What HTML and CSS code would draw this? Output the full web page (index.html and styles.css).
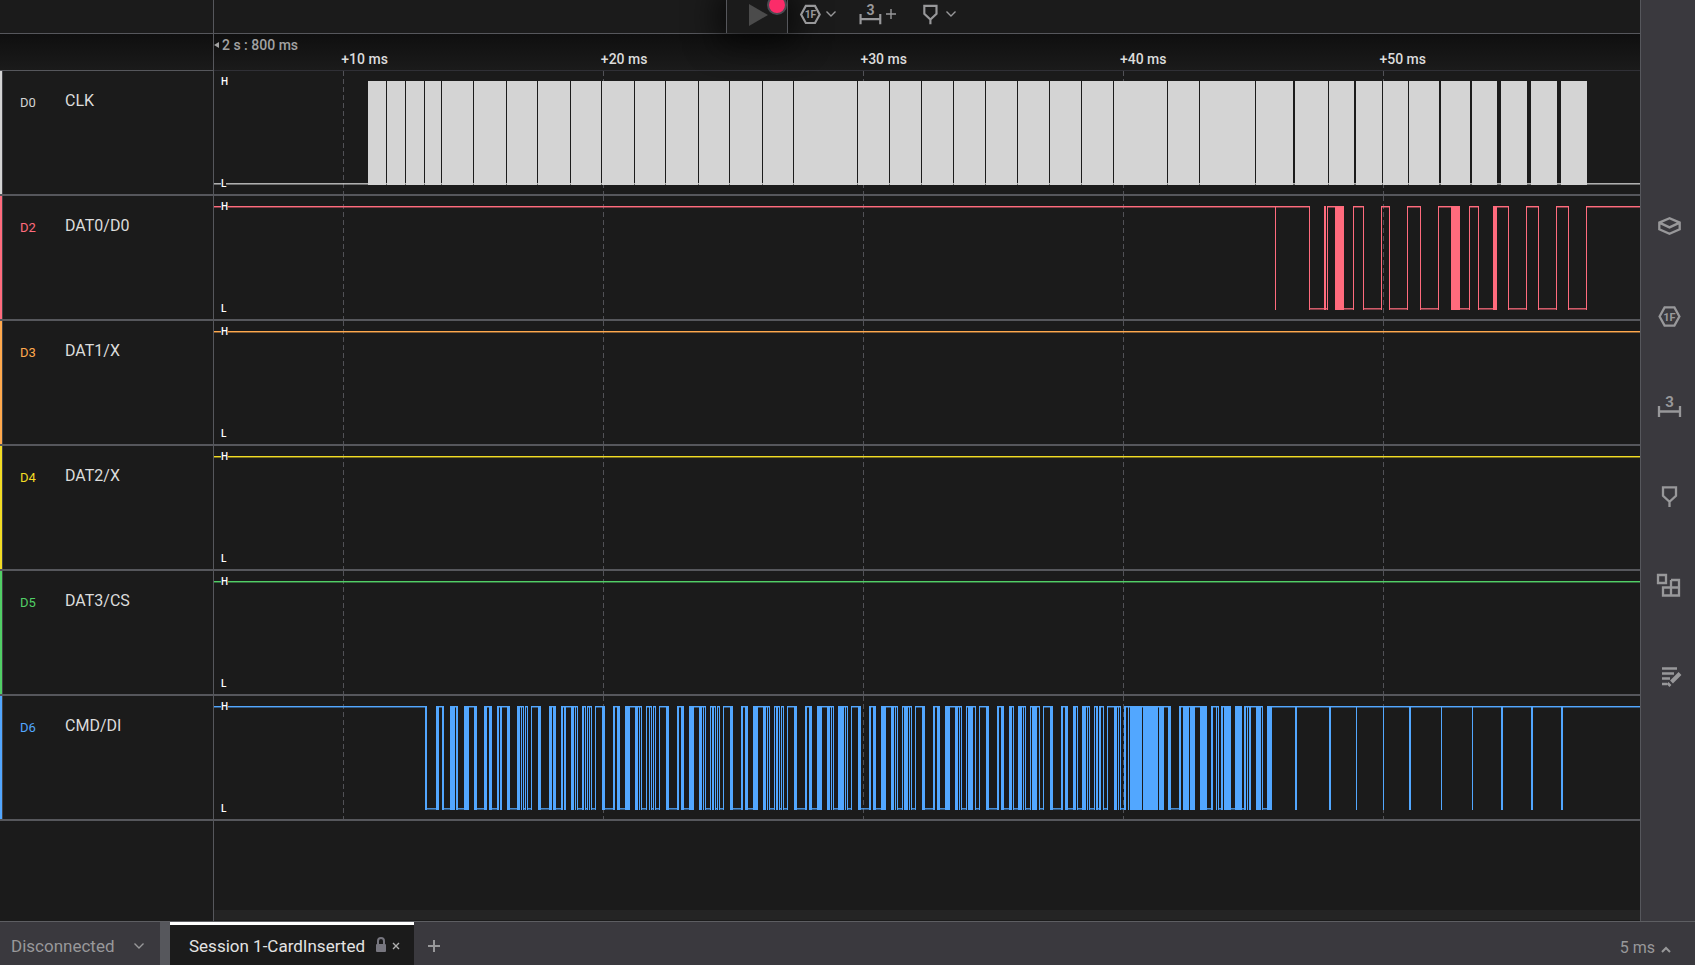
FILE: index.html
```html
<!DOCTYPE html>
<html lang="en">
<head>
<meta charset="utf-8">
<title>Session 1-CardInserted</title>
<link rel="stylesheet" href="styles.css">
</head>
<body>
<div class="app">
  <main class="analyzer">
    <header class="toolbar">
      <div class="side-cell"></div>
      <div class="tools">
        <button class="play" aria-label="Start capture">
          <svg width="20" height="22" viewBox="0 0 20 22"><path d="M0 0l19 11L0 22z"/></svg>
          <span class="record"></span>
        </button>
        <button class="tool" aria-label="Add analyzer">
          <svg class="icon" viewBox="0 0 32 32"><path d="M12.6 7.4h9.8l5 9.1-5 9.1h-9.8l-5-9.1z"/><text class="hex-text" x="17.5" y="20.5">1F</text></svg>
          <svg class="chev" viewBox="0 0 12 12"><path d="m1.500 3.500 4.500 4.500 4.500-4.500"/></svg>
        </button>
        <button class="tool" aria-label="Add measurement">
          <svg class="icon" viewBox="0 0 32 32"><path d="M7 16v11M28 16v11M7 21.500h21"/><text class="three-text" x="17.5" y="17">3</text></svg>
          <svg class="chev" viewBox="0 0 12 12"><path d="M6 1v10M1 6h10"/></svg>
        </button>
        <button class="tool" aria-label="Add marker">
          <svg class="icon" viewBox="0 0 32 32"><path d="M11 7.300h13v8.500l-6.500 6-6.500-6zM17.500 21.500V27"/></svg>
          <svg class="chev" viewBox="0 0 12 12"><path d="m1.500 3.500 4.500 4.500 4.500-4.500"/></svg>
        </button>
      </div>
    </header>
    <div class="ruler">
      <div class="side-cell"></div>
      <div class="scale">
        <div class="origin"><svg width="5" height="6" viewBox="0 0 5 6"><path d="M5 0v6L0 3z"/></svg>2 s : 800 ms</div>
        <div class="ticks"><span>+10 ms</span><span>+20 ms</span><span>+30 ms</span><span>+40 ms</span><span>+50 ms</span></div>
      </div>
    </div>
    <section class="channels">
      <div class="channel c0"><div class="name"><span class="id">D0</span><span class="title">CLK</span></div><div class="plot" data-wave="clk"></div></div>
      <div class="channel c2"><div class="name"><span class="id">D2</span><span class="title">DAT0/D0</span></div><div class="plot" data-wave="dat0"></div></div>
      <div class="channel c3"><div class="name"><span class="id">D3</span><span class="title">DAT1/X</span></div><div class="plot" data-wave="idle"></div></div>
      <div class="channel c4"><div class="name"><span class="id">D4</span><span class="title">DAT2/X</span></div><div class="plot" data-wave="idle"></div></div>
      <div class="channel c5"><div class="name"><span class="id">D5</span><span class="title">DAT3/CS</span></div><div class="plot" data-wave="idle"></div></div>
      <div class="channel c6"><div class="name"><span class="id">D6</span><span class="title">CMD/DI</span></div><div class="plot" data-wave="cmd"></div></div>
    </section>
    <div class="rest"><div class="side-cell"></div><div class="scroll"></div></div>
  </main>
  <nav class="sidebar" aria-label="Panels">
    <button aria-label="Device"><svg class="icon" viewBox="0 0 32 32"><path d="M17.500 8.200 7.300 12.600v6.600l10.200 4.600 10.200-4.600v-6.600zM7.300 12.600 17.500 17.400l10.200-4.800"/></svg></button>
    <button aria-label="Analyzers"><svg class="icon" viewBox="0 0 32 32"><path d="M12.6 7.400h9.800l5 9.100-5 9.100h-9.800l-5-9.100z"/><text class="hex-text" x="17.5" y="20.5">1F</text></svg></button>
    <button aria-label="Measurements"><svg class="icon" viewBox="0 0 32 32"><path d="M7 16v11M28 16v11M7 21.500h21"/><text class="three-text" x="17.5" y="17">3</text></svg></button>
    <button aria-label="Markers"><svg class="icon" viewBox="0 0 32 32"><path d="M11 7.300h13v8.500l-6.500 6-6.500-6zM17.500 21.500V27"/></svg></button>
    <button aria-label="Extensions"><svg class="icon" viewBox="0 0 32 32"><path d="M6 5h8v8H6zM19 10h8v15.500H11V17.500h16M19 10v15.500"/></svg></button>
    <button aria-label="Notes"><svg class="icon" viewBox="0 0 32 32"><path d="M10 8.500h15M10 13.500h12M10 18.500h8M10 24h5"/><path class="pencil" d="m19.500 22 8.500-8.500M16 25.500l2-2"/></svg></button>
  </nav>
  <footer class="status">
    <button class="device">Disconnected<svg class="chev" viewBox="0 0 12 12"><path d="m1.500 3.500 4.500 4.500 4.500-4.500"/></svg></button>
    <div class="tab">
      <span>Session 1-CardInserted</span>
      <svg class="lock" viewBox="0 0 10 15"><path class="shackle" d="M2 8V4a3 3 0 0 1 6 0v4"/><rect y="7" width="10" height="8" rx="1"/></svg>
      <button class="close" aria-label="Close tab"><svg width="8" height="8" viewBox="0 0 8 8"><path d="m1 1 6 6M7 1 1 7"/></svg></button>
    </div>
    <button class="add" aria-label="New tab"><svg width="14" height="14" viewBox="0 0 14 14"><path d="M7 1v12M1 7h12"/></svg></button>
    <button class="zoom-level">5 ms<svg class="caret" viewBox="0 0 10 7"><path d="m1 6 4-4 4 4"/></svg></button>
  </footer>
</div>
<script src="waves.js"></script>
</body>
</html>
```

FILE: styles.css
```css
* { box-sizing: border-box; }
body { margin: 0; background: #1b1b1b; color: #dcdcdc; font-family: Roboto, "Liberation Sans", sans-serif; }
button { border: 0; padding: 0; background: none; color: inherit; font: inherit; display: flex; align-items: center; }
.app { display: grid; grid-template-columns: minmax(0, 1fr) 55px; grid-template-rows: minmax(0, 1fr) auto; height: 100vh; overflow: hidden; }
.analyzer { display: flex; flex-direction: column; min-width: 0; }

.side-cell, .name { flex: none; width: 214px; border-right: 1px solid #56575c; }
.icon { width: 32px; height: 32px; fill: none; stroke: #98989a; stroke-width: 2.3; }
.chev { width: 12px; height: 12px; fill: none; stroke: #98989a; stroke-width: 1.4; }
.hex-text, .three-text { fill: #98989a; stroke: none; text-anchor: middle; font-weight: 700; }
.hex-text { font-size: 11px; }
.three-text { font-size: 15px; }
.pencil { stroke-width: 4; }

.toolbar { display: flex; height: 34px; border-bottom: 1px solid #56575c; }
.tools { display: flex; flex: 1; padding-left: 512px; }
.play { position: relative; width: 62px; height: 33px; padding: 0 0 4px 22px; border: solid #56575c; border-width: 0 1px; background: #1b1b1b; box-shadow: 0 0 32px 8px #000000b0; }
.play svg { fill: #4b4b4b; }
.record { position: absolute; top: -5px; right: 0; width: 20px; height: 20px; border: 2px solid #4b4b52; border-radius: 50%; background: #fb2c69; }
.tool { position: relative; height: 27px; margin-left: 6px; padding-right: 11px; }
.tool .icon { width: 30px; height: 30px; }
.tool .chev { margin-left: 1px; }

.ruler { display: flex; height: 37px; background: linear-gradient(#0f0f0f, #1b1b1b); }
.ruler .side-cell { border-bottom: 1px solid #56575c; }
.scale { flex: 1; border-bottom: 1px solid #303036; font-size: 14px; font-weight: 500; line-height: 14px; }
.origin { display: flex; align-items: center; gap: 3px; padding-top: 4px; color: #a2a2a2; }
.origin svg { fill: #a2a2a2; }
.ticks { display: flex; padding-left: 9%; }
.ticks span { width: 20.04%; text-indent: -1px; white-space: nowrap; }

.channel { display: flex; height: 125px; border-bottom: 2px solid #56575c; }
.name { display: flex; align-items: flex-start; padding: 20px 0 0 18px; border-left: 2px solid var(--c); box-shadow: inset 1px 0 #414146; }
.name .id { width: 45px; padding-top: 3px; color: var(--c); font-size: 13px; line-height: 18px; }
.name .title { font-size: 16px; line-height: 20px; }
.plot { position: relative; flex: 1; min-width: 0; }
.plot svg { display: block; width: 100%; height: 123px; shape-rendering: crispEdges; fill: var(--c); }
.grid { stroke: #515156; stroke-dasharray: 5 3; }
.trail { opacity: 0.45; }
.low { opacity: 0.8; }
.level { position: absolute; left: 7px; font-size: 10px; font-weight: 500; line-height: 12px; color: #fff; background: #1b1b1b; }
.level.h { top: 5px; }
.level.l { top: 107px; }
.c0 { --c: #d4d4d4; }
.c2 { --c: #ff6b7d; }
.c3 { --c: #ffa94d; }
.c4 { --c: #f2dc24; }
.c5 { --c: #51cf66; }
.c6 { --c: #52a7ff; }

.rest { display: flex; flex: 1; }
.scroll { align-self: flex-end; flex: 1; height: 11px; background: #242424; border-bottom: 1px solid #1b1b1b; }

.sidebar { display: flex; flex-direction: column; align-items: center; gap: 58px; padding-top: 210px; background: #3a393e; border-left: 1px solid #56575c; }

.status { grid-column: 1 / -1; display: flex; height: 44px; border-top: 1px solid #5d5e62; background: #3a393e; color: #98989a; font-size: 17px; }
.device { justify-content: space-between; width: 170px; padding: 4px 15px 0 11px; border-right: 10px solid #56575c; }
.tab { display: flex; align-items: center; width: 244px; padding: 1px 14px 0 19px; border-top: 3px solid #fff; background: #1b1b1b; color: #e3e3e3; }
.lock { width: 10px; height: 15px; margin: 0 6px 2px auto; fill: #77767f; }
.shackle { fill: none; stroke: #77767f; stroke-width: 2; }
.close svg { fill: none; stroke: #b0b0b0; stroke-width: 1.4; }
.add { margin-left: 13px; padding-top: 4px; }
.add svg { fill: none; stroke: #98989a; stroke-width: 2; }
.zoom-level { margin-left: auto; padding: 8px 24px 0 0; font-size: 16px; }
.caret { width: 10px; height: 7px; margin: 4px 0 0 6px; fill: none; stroke: #98989a; stroke-width: 2; }
```

FILE: waves.js
```js
// Each wave: the level before the first bar, then [start, end, level after] groups
// on a 1426-unit time axis.
const WIDTH = 1426;
const group = (offset, text) => {
  const t = text.trim().split(/\s+/);
  const out = [];
  for (let i = 0; i < t.length; i += 3) out.push([+t[i] + offset, +t[i + 1] + offset, t[i + 2]]);
  return out;
};

const clockGaps = [
  [172, 1], [191, 1], [210, 1], [227, 1], [259, 1], [292, 1], [323, 1], [356, 1], [387, 1],
  [420, 1], [451, 1], [484, 1], [515, 1], [548, 1], [579, 1], [643, 1], [675, 1], [707, 1],
  [739, 1], [771, 1], [803, 1], [835, 1], [867, 1], [899, 1], [953, 1], [985, 1], [1041, 1],
  [1079, 2], [1114, 1], [1140, 2], [1168, 1], [1194, 1], [1225, 2], [1256, 2], [1283, 4],
  [1313, 4], [1343, 4]
];
const clk = [];
let from = 154;
for (const [x, w] of clockGaps) { clk.push([from, x, "l"]); from = x + w; }
clk.push([from, 1373, "l"]);

const dat0 = group(1041, `20 21 h 54 55 l 69 71 l 72 73 h 80 89 l 98 99 h 108 109 l 126 127 h 134 135 l
 152 153 h 165 166 l 183 184 h 196 205 l 214 215 h 223 224 l 238 242 h 253 254 l 271 272 h
 283 284 l 301 302 h 313 314 l 331 332 h`);

const cmd = group(186, `25 27 l 36 39 h 42 44 l 50 55 h 56 58 l 64 69 h 74 77 l 84 87 h 89 92 l 97 99 h
 100 102 h 107 110 l 117 120 h 121 122 h 123 124 l 125 126 h 127 128 l 131 132 h 138 141 l
 149 152 h 153 156 l 161 163 h 164 166 h 171 174 h 175 176 h 177 178 l 182 184 h 185 186 l
 187 188 h 189 190 h 191 192 l 195 196 h 202 205 l 213 215 h 217 220 l 225 230 h 235 238 h
 239 240 h 241 242 l 246 247 h 249 250 h 251 252 l 253 254 h 255 256 l 259 260 h 266 269 l
 277 279 h 281 284 l 289 294 h 299 302 h 303 304 h 305 306 l 310 311 h 312 314 h 315 316 l
 317 318 h 319 320 l 323 324 h 330 333 l 341 343 h 345 348 l 353 358 h 363 366 h 367 368 h
 369 370 l 374 375 h 376 378 h 379 380 l 381 382 h 383 384 l 387 388 h 394 397 l 405 407 h
 409 412 l 417 422 h 427 430 h 431 432 h 433 434 l 438 444 h 445 446 h 447 448 l 451 452 h
 458 461 l`).concat(group(626, `29 31 h 33 36 l 41 46 h 51 54 h 55 56 h 57 58 l 62 63 h 64 68 h
 69 70 h 71 72 l 75 76 h 82 85 l 93 95 h 97 100 l 105 110 h 115 118 h 119 120 h 121 122 l
 126 127 h 128 133 h 135 136 l 139 140 h 146 149 l 157 159 h 161 164 l 169 172 h 173 174 l
 178 182 h 183 184 h 185 186 l 190 191 h 192 197 h 199 200 l 203 204 h 210 213 l 221 223 h
 225 228 l 233 236 h 237 238 l 242 246 h 247 248 h 249 250 l 254 255 h 256 258 l 259 261 h
 263 264 l 267 268 h 274 277 h 278 279 h 280 281 l 284 286 h 288 289 h 290 302 h 303 318 h
 319 324 h 328 331 l 339 341 h 343 349 h 350 355 h 360 367 l 371 373 h 376 377 h 378 379 l
 381 383 h 384 391 l 395 401 h 401 402 l 404 406 h 407 408 h 409 411 h 416 421 h 422 423 l
 427 432 h`)).concat(group(0, `1081 1083 h 1115 1117 h 1142 1143 h 1169 1170 h 1195 1197 h
 1227 1228 h 1258 1259 h 1287 1289 h 1317 1319 h 1347 1349 h`));

const waves = { clk: ["l", clk], dat0: ["h", dat0], cmd: ["h", cmd], idle: ["h", []] };

const rail = (level, a, b) => {
  const d = y => `M${a} ${y}H${b}v1H${a}z`;
  return level === "h"
    ? `<path d="${d(10)}"/><path class="trail" d="${d(11)}"/>`
    : `<path class="low" d="${d(112)}"/><path class="trail" d="${d(113)}"/>`;
};

document.querySelectorAll(".plot").forEach(plot => {
  let [level, bars] = waves[plot.dataset.wave];
  let x = 0;
  let body = "";
  for (const gx of [129, 389, 649, 909, 1169]) body += `<path class="grid" d="M${gx}.5 0V123"/>`;
  for (const [a, b, next] of bars) {
    body += rail(level, x, a) + `<path d="M${a} 10H${b}V114H${a}z"/>`;
    x = b;
    level = next;
  }
  body += rail(level, x, WIDTH);
  plot.innerHTML = `<svg viewBox="0 0 ${WIDTH} 123" preserveAspectRatio="none" aria-hidden="true">${body}</svg>`
    + `<span class="level h">H</span><span class="level l">L</span>`;
});
```
